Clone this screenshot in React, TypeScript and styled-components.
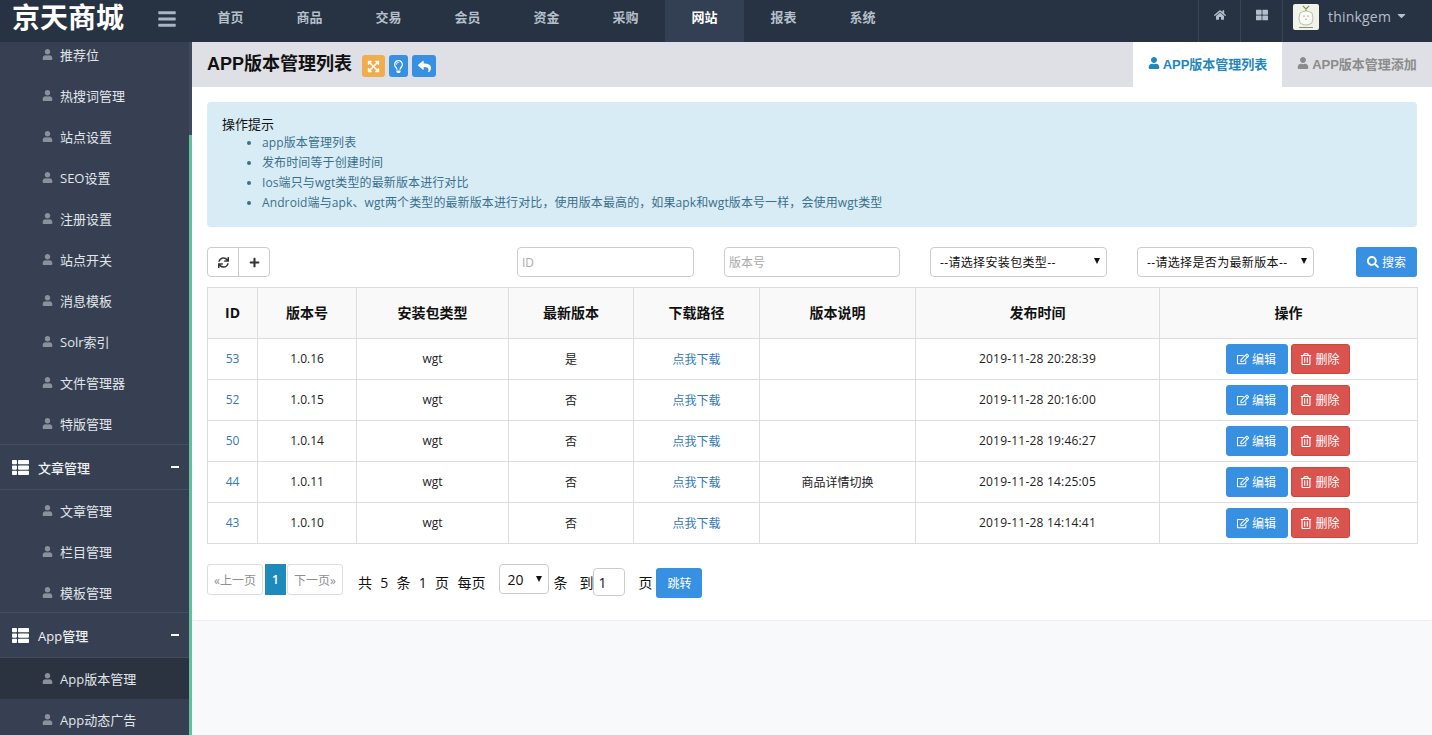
import React from "react";
import styled, { createGlobalStyle } from "styled-components";
import {
  FaBars, FaHome, FaThLarge, FaCaretDown, FaUser, FaThList, FaExpandArrowsAlt,
  FaRegLightbulb, FaReply, FaSync, FaPlus, FaSearch, FaRegEdit, FaRegTrashAlt,
} from "react-icons/fa";

const Global = createGlobalStyle`
  html, body { margin: 0; padding: 0; height: 100%; overflow: hidden; background: #f8f9fb; }
  body { font-family: "Open Sans", "Noto Sans CJK SC", sans-serif; font-size: 13px; color: #111; }
  * { box-sizing: border-box; }
`;

const Page = styled.div`display: flex; flex-direction: column; width: 1432px; height: 735px; overflow: hidden;`;
const Header = styled.header`display: flex; align-items: stretch; height: 42px; flex: none; background: #273242;`;
const Logo = styled.div`width: 137px; padding-left: 12px; font-size: 28px; line-height: 34px; font-weight: 700; color: #fff; white-space: nowrap;`;
const Burger = styled.div`width: 54px; padding-left: 20px; padding-top: 8px; color: #a8b6c4; font-size: 20px;`;
const Nav = styled.nav`display: flex; flex: 1;`;
const NavItem = styled.div<{ $active?: boolean }>`
  width: 79px; text-align: center; line-height: 34px; font-size: 13px; font-weight: 600;
  color: ${(p) => (p.$active ? "#fff" : "#b4bfca")};
  background: ${(p) => (p.$active ? "#333f52" : "transparent")};
`;
const IconCell = styled.div`
  width: 42px; border-left: 1px solid #3a4556; color: #b4bfca; font-size: 12px;
  display: flex; justify-content: center; padding-top: 9px;
`;
const UserCell = styled.div`
  width: 150px; border-left: 1px solid #3a4556; display: flex; align-items: flex-start;
  padding: 4px 0 0 10px; color: #b4bfca; font-size: 14px;
`;
const Avatar = styled.svg`width: 26px; height: 26px; border-radius: 2px; flex: none;`;
const UserName = styled.span`margin-left: 9px; line-height: 25px; letter-spacing: 0.2px;`;
const Caret = styled.span`margin-left: 4px; line-height: 27px; font-size: 13px;`;

const Body = styled.div`display: flex; flex: 1; min-height: 0;`;
const Sidebar = styled.aside`width: 189px; flex: none; overflow: hidden; background: #364052;`;
const SideScroll = styled.div`margin-top: -8px;`;
const SideItem = styled.div<{ $active?: boolean }>`
  display: flex; align-items: center; height: 41px; padding-left: 42px; font-size: 13px; color: #e2e6ea;
  background: ${(p) => (p.$active ? "#2b3240" : "transparent")};
  svg { color: #8a919c; font-size: 11px; margin-right: 7px; flex: none; }
`;
const SideGroup = styled.div<{ $pull?: number }>`
  position: relative; display: flex; align-items: center; height: 46px; margin-top: ${(p) => p.$pull ?? 0}px;
  padding: 0 10px 0 12px; font-size: 13px; font-weight: 500; color: #eef0f2;
  background: #364052; border-top: 1px solid #434e60; border-bottom: 1px solid #434e60;
  svg { color: #fff; font-size: 17px; margin-right: 9px; flex: none; }
`;
const GroupLabel = styled.span`flex: 1;`;
const Dash = styled.span`width: 8px; height: 2px; background: #fff;`;
const Track = styled.div`width: 3px; flex: none; background: linear-gradient(#3f4a5c 0, #3f4a5c 93px, #62c09c 93px);`;

const Main = styled.main`flex: 1; min-width: 0; display: flex; flex-direction: column;`;
const Panel = styled.div`background: #fff; height: 579px; border-bottom: 1px solid #eceef1; border-radius: 0 0 3px 3px;`;
const TitleBar = styled.div`display: flex; height: 45px; background: #dfe0e5;`;
const Title = styled.h1`margin: 0 10px 0 15px; font-family: "Liberation Sans", "Noto Sans CJK SC", sans-serif; font-size: 18px; line-height: 45px; font-weight: 700; color: #111; white-space: nowrap;`;
const TitleTools = styled.div`display: flex; gap: 4px; flex: 1; padding-top: 13px;`;
const ToolBtn = styled.div<{ $bg: string; $w: number }>`
  width: ${(p) => p.$w}px; height: 22px; border-radius: 3px; background: ${(p) => p.$bg};
  color: #fff; font-size: 13px; display: flex; align-items: center; justify-content: center;
`;
const Tab = styled.div<{ $active?: boolean }>`
  width: ${(p) => (p.$active ? 149 : 150)}px; display: flex; align-items: center; justify-content: center; gap: 3px;
  font-family: "Liberation Sans", "Noto Sans CJK SC", sans-serif;
  font-size: 13px; font-weight: 700; white-space: nowrap; padding-bottom: 3px;
  background: ${(p) => (p.$active ? "#fff" : "transparent")};
  color: ${(p) => (p.$active ? "#1f87bd" : "#8b8b8b")};
  svg { font-size: 12px; }
`;
const Content = styled.div`padding: 15px 15px 0;`;
const Alert = styled.div`
  height: 125px; padding: 13px 15px; background: #d8ecf5; border-radius: 4px; color: #111; font-size: 13px; line-height: 18px;
`;
const AlertList = styled.ul`margin: 0; padding: 0 0 0 40px; list-style: disc; color: #3a6f8c; font-size: 12px; letter-spacing: 0.11px;`;
const AlertLi = styled.li`line-height: 20px;`;

const Filter = styled.div`display: flex; align-items: flex-start; margin-top: 20px; height: 30px;`;
const BtnGroup = styled.div`display: flex; width: 63px; height: 30px; border: 1px solid #ccc; border-radius: 4px; margin-right: auto;`;
const GroupBtn = styled.div`
  flex: 1; display: flex; align-items: center; justify-content: center; font-size: 11px; color: #333;
  & + & { border-left: 1px solid #ccc; }
`;
const FieldRow = styled.div`display: flex; gap: 30px;`;
const TextField = styled.input<{ $w: number }>`
  width: ${(p) => p.$w}px; height: 30px; padding: 0 4px; border: 1px solid #ccc; border-radius: 4px;
  font: 12px "Open Sans", "Noto Sans CJK SC", sans-serif; outline: none;
  &::placeholder { color: #aaa; }
`;
const SelectWrap = styled.div<{ $ml?: number; $arrowTop: number }>`
  position: relative; flex: none; margin-left: ${(p) => p.$ml ?? 0}px;
  &::after {
    content: ""; position: absolute; right: 7px; top: ${(p) => p.$arrowTop}px; pointer-events: none;
    border-left: 3px solid transparent; border-right: 3px solid transparent; border-top: 6px solid #111;
  }
`;
const SelectField = styled.select`
  display: block; appearance: none; width: 177px; height: 30px; padding: 0 9px; border: 1px solid #ccc; border-radius: 4px; background: #fff;
  font: 12px "Open Sans", "Noto Sans CJK SC", sans-serif; letter-spacing: 0.35px; color: #111; outline: none;
`;
const SearchBtn = styled.div`
  margin-left: 42px; width: 61px; height: 30px; border-radius: 3px; background: #3790e2; color: #fff; font-size: 12px;
  display: flex; align-items: center; justify-content: center; gap: 3px;
  svg { font-size: 12px; }
`;

const Table = styled.table`
  width: 1210px; margin-top: 10px; border-collapse: collapse; table-layout: fixed; font-size: 12px;
`;
const Th = styled.th`
  height: 51px; border: 1px solid #ddd; background: #f9f9f9; font-size: 14px; font-weight: 600; color: #111; text-align: center; padding: 0 0 2px;
`;
const IdTh = styled(Th)`font-weight: 700;`;
const Td = styled.td`height: 41px; border: 1px solid #ddd; text-align: center; color: #222; padding: 0 0 1px;`;
const DateTd = styled(Td)`letter-spacing: 0.2px;`;
const LinkText = styled.span`color: #337ab7;`;
const RowActions = styled.div`display: flex; justify-content: center; gap: 3px; padding: 1px 2px 0 0;`;
const RowBtn = styled.div<{ $danger?: boolean }>`
  width: ${(p) => (p.$danger ? 59 : 62)}px; height: 30px; border-radius: 3px; color: #fff; font-size: 12px;
  background: ${(p) => (p.$danger ? "#d9534f" : "#3790e2")};
  border: 1px solid ${(p) => (p.$danger ? "#d0443f" : "#3790e2")};
  display: flex; align-items: center; justify-content: center; gap: 3px;
  svg { font-size: 12px; }
`;

const Pager = styled.div`display: flex; align-items: flex-start; margin-top: 20px; font-size: 14px; color: #111;`;
const PageBtn = styled.div`
  width: 56px; height: 31px; border: 1px solid #ddd; border-radius: 3px; color: #8f8f8f; font-size: 12px;
  display: flex; align-items: center; justify-content: center; white-space: nowrap;
`;
const PageNow = styled.div`
  width: 21px; height: 31px; margin: 0 1px 0 2px; background: #1d8abb; color: #fff; font-weight: 600; font-size: 12px;
  display: flex; align-items: center; justify-content: center;
`;
const PagerText = styled.span<{ $ml: number }>`
  margin-left: ${(p) => p.$ml}px; line-height: 20px; margin-top: 9px; white-space: pre; word-spacing: 0.5px;
`;
const PageSize = styled.select`
  display: block; appearance: none; width: 50px; height: 30px; padding: 0 7px; border: 1px solid #ccc; border-radius: 4px; background: #fff;
  font: 14px "Open Sans", sans-serif; color: #111; outline: none;
`;
const JumpInput = styled.input`
  width: 32px; height: 28px; margin-top: 4px; padding: 0 4px; border: 1px solid #ccc; border-radius: 4px;
  font: 14px "Open Sans", sans-serif; color: #111; outline: none;
`;
const JumpBtn = styled.div`
  width: 46px; height: 30px; margin: 4px 0 0 4px; background: #3790e2; color: #fff; border-radius: 3px; font-size: 12px;
  display: flex; align-items: center; justify-content: center;
`;

const navs = ["首页", "商品", "交易", "会员", "资金", "采购", "网站", "报表", "系统"];
const group1 = ["推荐位", "热搜词管理", "站点设置", "SEO设置", "注册设置", "站点开关", "消息模板", "Solr索引", "文件管理器", "特版管理"];
const group2 = ["文章管理", "栏目管理", "模板管理"];
const group3 = ["App版本管理", "App动态广告"];
const tips = ["app版本管理列表", "发布时间等于创建时间", "Ios端只与wgt类型的最新版本进行对比", "Android端与apk、wgt两个类型的最新版本进行对比，使用版本最高的，如果apk和wgt版本号一样，会使用wgt类型"];
const cols = [50, 99, 152, 125, 126, 156, 244, 258];
const heads = ["版本号", "安装包类型", "最新版本", "下载路径", "版本说明", "发布时间", "操作"];
const rows = [
  ["53", "1.0.16", "是", "", "2019-11-28 20:28:39"],
  ["52", "1.0.15", "否", "", "2019-11-28 20:16:00"],
  ["50", "1.0.14", "否", "", "2019-11-28 19:46:27"],
  ["44", "1.0.11", "否", "商品详情切换", "2019-11-28 14:25:05"],
  ["43", "1.0.10", "否", "", "2019-11-28 14:14:41"],
];

const AvatarImage = () => (
  <Avatar viewBox="0 0 26 26">
    <rect width="26" height="26" fill="#f1f2e8" />
    <path d="M7 9 Q5 15 7 19 Q13 23 19 19 Q21 14 19 9 Q13 5 7 9 Z" fill="#fbfbf6" stroke="#a3a896" strokeWidth="0.7" />
    <path d="M10 2 L13 5 L16 2 M13 5 L13 7" fill="none" stroke="#7d9a55" strokeWidth="1.1" />
    <circle cx="11" cy="12" r="0.6" fill="#555" />
    <circle cx="15" cy="12" r="0.6" fill="#555" />
    <path d="M12 15 Q13 16 14 15" fill="none" stroke="#777" strokeWidth="0.6" />
    <rect x="6" y="23" width="14" height="1" fill="#8c8f7c" />
  </Avatar>
);

export default function App() {
  return (
    <Page>
      <Global />
      <Header>
        <Logo>京天商城</Logo>
        <Burger><FaBars /></Burger>
        <Nav>
          {navs.map((n) => <NavItem key={n} $active={n === "网站"}>{n}</NavItem>)}
        </Nav>
        <IconCell><FaHome /></IconCell>
        <IconCell><FaThLarge /></IconCell>
        <UserCell>
          <AvatarImage />
          <UserName>thinkgem</UserName>
          <Caret><FaCaretDown /></Caret>
        </UserCell>
      </Header>
      <Body>
        <Sidebar>
          <SideScroll>
            {group1.map((s) => <SideItem key={s}><FaUser />{s}</SideItem>)}
            <SideGroup><FaThList /><GroupLabel>文章管理</GroupLabel><Dash /></SideGroup>
            {group2.map((s) => <SideItem key={s}><FaUser />{s}</SideItem>)}
            <SideGroup $pull={-1}><FaThList /><GroupLabel>App管理</GroupLabel><Dash /></SideGroup>
            {group3.map((s, i) => <SideItem key={s} $active={i === 0}><FaUser />{s}</SideItem>)}
          </SideScroll>
        </Sidebar>
        <Track />
        <Main>
          <Panel>
            <TitleBar>
              <Title>APP版本管理列表</Title>
              <TitleTools>
                <ToolBtn $bg="#f0ad4e" $w={23}><FaExpandArrowsAlt /></ToolBtn>
                <ToolBtn $bg="#3790e2" $w={19}><FaRegLightbulb /></ToolBtn>
                <ToolBtn $bg="#3790e2" $w={24}><FaReply /></ToolBtn>
              </TitleTools>
              <Tab $active><FaUser />APP版本管理列表</Tab>
              <Tab><FaUser />APP版本管理添加</Tab>
            </TitleBar>
            <Content>
              <Alert>
                操作提示
                <AlertList>
                  {tips.map((t) => <AlertLi key={t}>{t}</AlertLi>)}
                </AlertList>
              </Alert>
              <Filter>
                <BtnGroup>
                  <GroupBtn><FaSync /></GroupBtn>
                  <GroupBtn><FaPlus /></GroupBtn>
                </BtnGroup>
                <FieldRow>
                  <TextField $w={177} placeholder="ID" />
                  <TextField $w={176} placeholder="版本号" />
                  <SelectWrap $arrowTop={11}>
                    <SelectField defaultValue="a"><option value="a">--请选择安装包类型--</option></SelectField>
                  </SelectWrap>
                  <SelectWrap $arrowTop={11}>
                    <SelectField defaultValue="a"><option value="a">--请选择是否为最新版本--</option></SelectField>
                  </SelectWrap>
                </FieldRow>
                <SearchBtn><FaSearch />搜索</SearchBtn>
              </Filter>
              <Table>
                <colgroup>{cols.map((c, i) => <col key={i} width={c} />)}</colgroup>
                <thead>
                  <tr>
                    <IdTh>ID</IdTh>
                    {heads.map((h) => <Th key={h}>{h}</Th>)}
                  </tr>
                </thead>
                <tbody>
                  {rows.map((r) => (
                    <tr key={r[0]}>
                      <Td><LinkText>{r[0]}</LinkText></Td>
                      <Td>{r[1]}</Td>
                      <Td>wgt</Td>
                      <Td>{r[2]}</Td>
                      <Td><LinkText>点我下载</LinkText></Td>
                      <Td>{r[3]}</Td>
                      <DateTd>{r[4]}</DateTd>
                      <Td>
                        <RowActions>
                          <RowBtn><FaRegEdit />编辑</RowBtn>
                          <RowBtn $danger><FaRegTrashAlt />删除</RowBtn>
                        </RowActions>
                      </Td>
                    </tr>
                  ))}
                </tbody>
              </Table>
              <Pager>
                <PageBtn>«上一页</PageBtn>
                <PageNow>1</PageNow>
                <PageBtn>下一页»</PageBtn>
                <PagerText $ml={15}>{"共  5  条  1  页  每页"}</PagerText>
                <SelectWrap $ml={14} $arrowTop={12}>
                  <PageSize defaultValue="20"><option value="20">20</option></PageSize>
                </SelectWrap>
                <PagerText $ml={4}>条</PagerText>
                <PagerText $ml={12}>到</PagerText>
                <JumpInput defaultValue="1" />
                <PagerText $ml={13}>页</PagerText>
                <JumpBtn>跳转</JumpBtn>
              </Pager>
            </Content>
          </Panel>
        </Main>
      </Body>
    </Page>
  );
}
